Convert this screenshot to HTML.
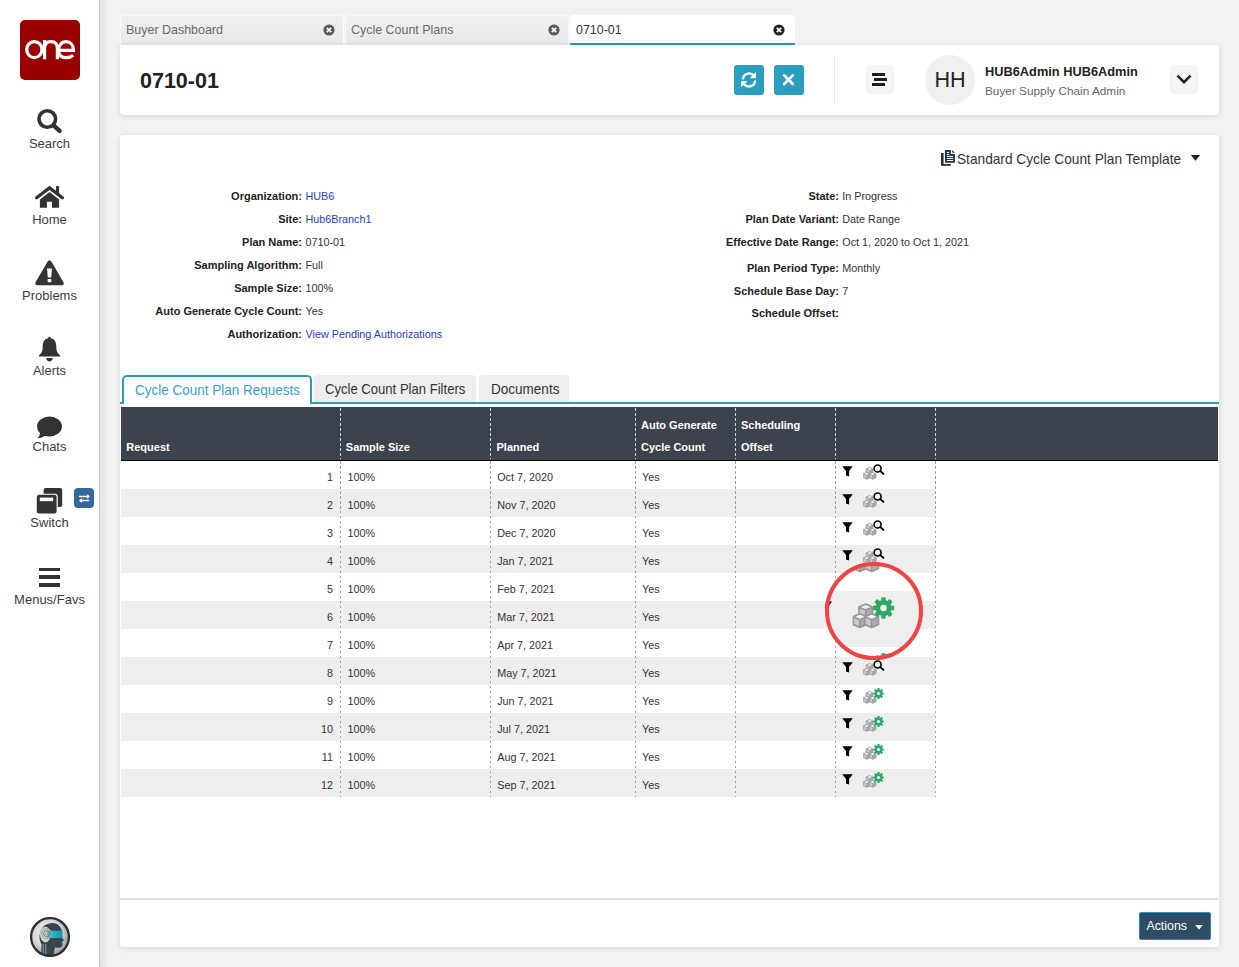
<!DOCTYPE html>
<html><head><meta charset="utf-8">
<style>
*{box-sizing:border-box}
html,body{margin:0;padding:0}
body{width:1239px;height:967px;overflow:hidden;position:relative;background:#f2f2f2;font-family:"Liberation Sans",sans-serif;color:#333}
.a{position:absolute}
.t{position:absolute;white-space:nowrap;line-height:1}
#side{left:0;top:0;width:100px;height:967px;background:#fff;border-right:1px solid #c8c8c8}
#shade{left:100px;top:0;width:9px;height:967px;background:linear-gradient(to right,rgba(0,0,0,0.06),rgba(0,0,0,0))}
.lbl{font-size:13px;color:#3d3d3d;left:0;width:99px;text-align:center}
.card{background:#fff;border-radius:3px;box-shadow:0 1px 6px rgba(0,0,0,0.11)}
.tab{top:15px;height:30px;background:linear-gradient(#efefef,#e9e9e9);border-radius:4px 4px 0 0;border:1px solid rgba(255,255,255,0.75);border-bottom:none}
.tabt{font-size:13px;color:#6a6a6a;top:23.2px;transform:scaleX(0.958);transform-origin:0 0}
.fl{font-size:11px;font-weight:bold;color:#222;text-align:right}
.fv{font-size:10.8px;color:#333}
.lnk{color:#2540cc}
.th{font-size:11px;font-weight:bold;color:#fff}
.td{font-size:10.8px;color:#333}
.vs{top:461px;height:336px;width:1px;background:repeating-linear-gradient(to bottom,#a0a0a0 0,#a0a0a0 2.5px,transparent 2.5px,transparent 5px)}
.vsh{top:408px;height:51px;width:1px;background:repeating-linear-gradient(to bottom,#d4d6da 0,#d4d6da 3px,transparent 3px,transparent 5px)}
</style></head><body>

<!-- sidebar -->
<div id="side" class="a"></div>
<div id="shade" class="a"></div>

<!-- logo -->
<div class="a" style="left:20px;top:20px;width:60px;height:60px;background:#990000;border-radius:5px"></div>
<svg class="a" style="left:20px;top:20px" width="60" height="60" viewBox="0 0 60 60">
  <g fill="none" stroke="#fff" stroke-width="3.2">
    <ellipse cx="14.35" cy="29.6" rx="7.65" ry="8"/>
    <path d="M24.55 39.2 V20 M24.55 28 C24.55 23 27.5 21.6 31 21.6 C35 21.6 37.4 23.5 37.4 28.5 V39.2"/>
    <path d="M38.6 30.35 H53.5 C53.5 25 50.5 21.6 46 21.6 C41.5 21.6 38.6 25.5 38.6 30.4 C38.6 35.5 41.8 37.6 46.2 37.6 C49.3 37.6 51.5 36.8 53.3 35.2"/>
  </g>
</svg>

<!-- Search -->
<svg class="a" style="left:36px;top:108px" width="28" height="28" viewBox="0 0 28 28">
  <circle cx="11.3" cy="11" r="8.3" fill="none" stroke="#333" stroke-width="3.6"/>
  <path d="M17.6 17.4 L23.6 22.8" stroke="#333" stroke-width="4.4" stroke-linecap="round"/>
</svg>
<div class="t lbl" style="top:136.8px">Search</div>

<!-- Home -->
<svg class="a" style="left:34px;top:185px" width="32" height="24" viewBox="0 0 32 24">
  <path d="M2.6 12.7 L15.5 2.9 L28.4 12.7" fill="none" stroke="#333" stroke-width="3.3" stroke-linecap="round"/>
  <rect x="22" y="1.1" width="3.1" height="7.5" fill="#333"/>
  <path d="M5.9 14.4 L15.5 6.9 L25.1 14.4 V22.8 H18 V16.7 H12.9 V22.8 H5.9 Z" fill="#333"/>
</svg>
<div class="t lbl" style="top:212.8px">Home</div>

<!-- Problems -->
<svg class="a" style="left:34px;top:259px" width="32" height="28" viewBox="0 0 32 28">
  <path d="M15.5 1.5 C16.6 1.5 17.2 2.2 17.7 3 L29.4 23.2 C30.3 24.8 29.4 26.3 27.6 26.3 H3.4 C1.6 26.3 0.7 24.8 1.6 23.2 L13.3 3 C13.8 2.2 14.4 1.5 15.5 1.5 Z" fill="#333"/>
  <path d="M13 9.5 H18 L17.2 18.5 H13.8 Z" fill="#fff"/>
  <rect x="13.6" y="20" width="3.8" height="3.2" rx="0.8" fill="#fff"/>
</svg>
<div class="t lbl" style="top:288.7px">Problems</div>

<!-- Alerts -->
<svg class="a" style="left:38px;top:336px" width="24" height="27" viewBox="0 0 24 27">
  <path d="M11.5 0.8 C12.4 0.8 12.8 1.4 12.8 2.2 C17 3 18.3 6.5 18.3 10.5 C18.3 15 19.2 17 22 19.2 V20.5 H1 V19.2 C3.8 17 4.7 15 4.7 10.5 C4.7 6.5 6 3 10.2 2.2 C10.2 1.4 10.6 0.8 11.5 0.8 Z" fill="#333"/>
  <path d="M8.2 22 H14.8 C14.5 24 13.2 25.5 11.5 25.5 C9.8 25.5 8.5 24 8.2 22 Z" fill="#333"/>
</svg>
<div class="t lbl" style="top:364.2px">Alerts</div>

<!-- Chats -->
<svg class="a" style="left:36px;top:416px" width="28" height="24" viewBox="0 0 28 24">
  <ellipse cx="13.5" cy="10.5" rx="12.45" ry="10" fill="#333"/>
  <path d="M3.6 15.5 C4.6 18.5 3.2 20.8 1.1 22.3 C4.5 22.2 7.2 21.3 9.6 19.6 Z" fill="#333"/>
</svg>
<div class="t lbl" style="top:440.4px">Chats</div>

<!-- Switch -->
<svg class="a" style="left:36px;top:487px" width="28" height="28" viewBox="0 0 28 28">
  <rect x="7.6" y="1" width="18.6" height="19" rx="2.2" fill="#333"/>
  <rect x="-0.2" y="6.8" width="22" height="21" rx="3" fill="#fff"/>
  <rect x="0.8" y="7.8" width="19.8" height="18.6" rx="2.2" fill="#333"/>
  <rect x="3.8" y="10.6" width="13.4" height="3.6" fill="#fff"/>
</svg>
<div class="a" style="left:74px;top:488px;width:20px;height:20px;background:#36679a;border-radius:4px"></div>
<svg class="a" style="left:74px;top:488px" width="20" height="20" viewBox="0 0 20 20">
  <path d="M4.9 8.5 H13.6 M6.4 12.5 H15.1" stroke="#fff" stroke-width="1.7"/>
  <path d="M16.1 8.5 L13.1 6.2 V10.8 Z M4.9 12.5 L7.9 10.2 V14.8 Z" fill="#fff"/>
</svg>
<div class="t lbl" style="top:516.4px">Switch</div>

<!-- Menus -->
<div class="a" style="left:39px;top:567.5px;width:21px;height:3.5px;background:#333"></div>
<div class="a" style="left:39px;top:575.2px;width:21px;height:3.5px;background:#333"></div>
<div class="a" style="left:39px;top:583px;width:21px;height:3.5px;background:#333"></div>
<div class="t lbl" style="top:592.7px">Menus/Favs</div>

<!-- bottom avatar -->
<svg class="a" style="left:30px;top:917px" width="40" height="40" viewBox="0 0 40 40">
  <defs>
    <radialGradient id="sg" cx="0.42" cy="0.4" r="0.65"><stop offset="0" stop-color="#f6f6f6"/><stop offset="0.6" stop-color="#d4d4d4"/><stop offset="1" stop-color="#8c8c8c"/></radialGradient>
    <linearGradient id="tg" x1="0" x2="1"><stop offset="0" stop-color="#3cc0d8"/><stop offset="1" stop-color="#1d93ad"/></linearGradient>
    <clipPath id="cc"><circle cx="20" cy="20" r="18.6"/></clipPath>
  </defs>
  <circle cx="20" cy="20" r="19" fill="url(#sg)"/>
  <g clip-path="url(#cc)">
    <path d="M11 40 L11.5 27 C9.5 24 9 20 10 16 C11.5 9.5 16.5 6 22.5 6 C28 6 31.5 10 32 15 L32.2 20.5 L34 23.5 L32.2 24.5 L32.5 27.5 C32 29.5 30.5 30.8 28.5 30.8 L25 30.5 L23 40 Z" fill="#36454c"/>
    <ellipse cx="15.4" cy="17.6" rx="5.4" ry="7.8" fill="#c9d5d9"/>
    <path d="M17.3 13.7 H32.5 V20.9 H17.3 Z" fill="url(#tg)"/>
    <circle cx="16.7" cy="16.6" r="5" fill="none" stroke="#b89c66" stroke-width="1"/>
    <circle cx="16.7" cy="16.6" r="3.1" fill="none" stroke="#6f7f86" stroke-width="1"/>
    <circle cx="16.7" cy="16.6" r="1.3" fill="none" stroke="#b89c66" stroke-width="0.8"/>
    <path d="M13.2 27 V40 M15.8 27 V40" stroke="#9fb0b6" stroke-width="0.9"/>
  </g>
  <circle cx="20" cy="20" r="18.9" fill="none" stroke="#2b3033" stroke-width="2.3"/>
</svg>

<!-- top tabs -->
<div class="a tab" style="left:120px;width:224px"></div>
<div class="t tabt" style="left:126px">Buyer Dashboard</div>
<div class="a tab" style="left:345px;width:224px"></div>
<div class="t tabt" style="left:351px">Cycle Count Plans</div>
<div class="a" style="left:570px;top:15px;width:225px;height:30px;background:#fff;border-radius:4px 4px 0 0;border-bottom:2px solid #2a9cbd"></div>
<div class="t tabt" style="left:576px;color:#333">0710-01</div>
<svg class="a" style="left:323px;top:24px" width="12" height="12" viewBox="0 0 12 12"><circle cx="6" cy="6" r="5.6" fill="#5a5a5a"/><path d="M3.8 3.8 L8.2 8.2 M8.2 3.8 L3.8 8.2" stroke="#fff" stroke-width="1.7"/></svg>
<svg class="a" style="left:548px;top:24px" width="12" height="12" viewBox="0 0 12 12"><circle cx="6" cy="6" r="5.6" fill="#5a5a5a"/><path d="M3.8 3.8 L8.2 8.2 M8.2 3.8 L3.8 8.2" stroke="#fff" stroke-width="1.7"/></svg>
<svg class="a" style="left:773px;top:24px" width="12" height="12" viewBox="0 0 12 12"><circle cx="6" cy="6" r="5.6" fill="#222"/><path d="M3.8 3.8 L8.2 8.2 M8.2 3.8 L3.8 8.2" stroke="#fff" stroke-width="1.7"/></svg>

<!-- header card -->
<div class="a card" style="left:120px;top:45px;width:1099px;height:70px;border-radius:0 4px 4px 4px"></div>
<div class="t" style="left:140px;top:71.0px;font-size:21.5px;font-weight:bold;color:#222">0710-01</div>
<div class="a" style="left:734px;top:65px;width:30px;height:30px;background:#2b9fbf;border-radius:3px"></div>
<svg class="a" style="left:734px;top:65px" width="30" height="30" viewBox="0 0 30 30">
  <path d="M8.9 14.6 A6.1 6.1 0 0 1 19.9 11" fill="none" stroke="#fff" stroke-width="2.3"/>
  <path d="M21.9 7 V13.2 H15.7 Z" fill="#fff"/>
  <path d="M21.1 15.4 A6.1 6.1 0 0 1 10.1 19" fill="none" stroke="#fff" stroke-width="2.3"/>
  <path d="M7.1 22.2 V16 H13.3 Z" fill="#fff"/>
</svg>
<div class="a" style="left:774px;top:65px;width:30px;height:30px;background:#2b9fbf;border-radius:3px"></div>
<svg class="a" style="left:774px;top:65px" width="30" height="30" viewBox="0 0 30 30">
  <path d="M10.2 10.4 L18.8 19 M18.8 10.4 L10.2 19" stroke="#fff" stroke-width="2.7" stroke-linecap="round"/>
</svg>
<div class="a" style="left:834px;top:56px;width:1px;height:48px;background:#e6e6e6"></div>
<div class="a" style="left:866px;top:65px;width:28px;height:29px;background:#f5f5f5;border-radius:4px"></div>
<div class="a" style="left:872px;top:73.1px;width:13px;height:2.7px;background:#1e1e1e"></div>
<div class="a" style="left:874px;top:78.2px;width:13px;height:2.7px;background:#1e1e1e"></div>
<div class="a" style="left:872px;top:83.2px;width:13px;height:2.7px;background:#1e1e1e"></div>
<div class="a" style="left:925px;top:55px;width:50px;height:50px;background:#f0f0f0;border-radius:50%"></div>
<div class="t" style="left:925px;width:50px;text-align:center;top:69.3px;font-size:22.5px;color:#222;transform:scaleX(0.96)">HH</div>
<div class="t" style="left:985px;top:65.8px;font-size:12.8px;font-weight:bold;color:#222">HUB6Admin HUB6Admin</div>
<div class="t" style="left:985px;top:85.8px;font-size:11.8px;color:#666">Buyer Supply Chain Admin</div>
<div class="a" style="left:1170px;top:65px;width:28px;height:29px;background:#f5f5f5;border-radius:4px"></div>
<svg class="a" style="left:1170px;top:65px" width="28" height="29" viewBox="0 0 28 29">
  <path d="M8.4 11.6 L14 17.2 L19.6 11.6" fill="none" stroke="#222" stroke-width="2.6" stroke-linecap="square"/>
</svg>

<!-- main card -->
<div class="a card" style="left:120px;top:135px;width:1099px;height:812px"></div>

<!-- template -->
<svg class="a" style="left:940px;top:149px" width="17" height="18" viewBox="0 0 17 18">
  <path d="M1 4 H3.6 V15.1 H10.8 V16.7 H1 Z" fill="#1f3347"/>
  <path d="M5 1 H10.8 V5.1 H14.9 V13.8 H5 Z" fill="#1f3347"/>
  <path d="M12.1 1 L14.9 3.8 H12.1 Z" fill="#1f3347"/>
  <path d="M6.9 3.45 H9.1 M6.9 5.45 H9.1 M6.9 7.45 H13.1 M6.9 9.45 H13.1 M6.9 11.5 H13.1" stroke="#fff" stroke-width="1"/>
</svg>
<div class="t" style="left:957.4px;top:151.2px;font-size:15px;color:#333;transform:scaleX(0.912);transform-origin:0 0">Standard Cycle Count Plan Template</div>
<svg class="a" style="left:1190px;top:154px" width="11" height="8" viewBox="0 0 11 8"><path d="M0.8 1 H10.2 L5.5 6.8 Z" fill="#222"/></svg>

<!-- fields left -->
<div class="t fl" style="left:100px;width:202px;top:190.6px">Organization:</div>
<div class="t fv lnk" style="left:305.5px;top:190.8px">HUB6</div>
<div class="t fl" style="left:100px;width:202px;top:213.6px">Site:</div>
<div class="t fv lnk" style="left:305.5px;top:213.8px">Hub6Branch1</div>
<div class="t fl" style="left:100px;width:202px;top:236.7px">Plan Name:</div>
<div class="t fv" style="left:305.5px;top:236.9px">0710-01</div>
<div class="t fl" style="left:100px;width:202px;top:259.6px">Sampling Algorithm:</div>
<div class="t fv" style="left:305.5px;top:259.8px">Full</div>
<div class="t fl" style="left:100px;width:202px;top:282.6px">Sample Size:</div>
<div class="t fv" style="left:305.5px;top:282.8px">100%</div>
<div class="t fl" style="left:100px;width:202px;top:305.6px">Auto Generate Cycle Count:</div>
<div class="t fv" style="left:305.5px;top:305.8px">Yes</div>
<div class="t fl" style="left:100px;width:202px;top:328.6px">Authorization:</div>
<div class="t fv lnk" style="left:305.5px;top:328.8px">View Pending Authorizations</div>

<!-- fields right -->
<div class="t fl" style="left:600px;width:239px;top:190.8px">State:</div>
<div class="t fv" style="left:842.3px;top:191px">In Progress</div>
<div class="t fl" style="left:600px;width:239px;top:213.9px">Plan Date Variant:</div>
<div class="t fv" style="left:842.3px;top:214.1px">Date Range</div>
<div class="t fl" style="left:600px;width:239px;top:236.6px">Effective Date Range:</div>
<div class="t fv" style="left:842.3px;top:236.8px">Oct 1, 2020 to Oct 1, 2021</div>
<div class="t fl" style="left:600px;width:239px;top:262.8px">Plan Period Type:</div>
<div class="t fv" style="left:842.3px;top:263px">Monthly</div>
<div class="t fl" style="left:600px;width:239px;top:285.9px">Schedule Base Day:</div>
<div class="t fv" style="left:842.3px;top:286.1px">7</div>
<div class="t fl" style="left:600px;width:239px;top:308.3px">Schedule Offset:</div>

<!-- sub tabs -->
<div class="a" style="left:120px;top:402px;width:1099px;height:2px;background:#2a9cbd"></div>
<div class="a" style="left:122px;top:375px;width:190px;height:29px;background:#fff;border:2px solid #2a9cbd;border-bottom:none;border-radius:5px 5px 0 0"></div>
<div class="t" style="left:134.5px;top:382.6px;font-size:14.4px;color:#3a9fc6;transform:scaleX(0.937);transform-origin:0 0">Cycle Count Plan Requests</div>
<div class="a" style="left:314px;top:375px;width:162px;height:27px;background:#eeeeee;border-radius:4px 4px 0 0"></div>
<div class="t" style="left:325px;top:381.8px;font-size:14.4px;color:#333;transform:scaleX(0.909);transform-origin:0 0">Cycle Count Plan Filters</div>
<div class="a" style="left:479px;top:375px;width:90px;height:27px;background:#eeeeee;border-radius:4px 4px 0 0"></div>
<div class="t" style="left:490.6px;top:381.8px;font-size:14.4px;color:#333;transform:scaleX(0.94);transform-origin:0 0">Documents</div>

<!-- table header -->
<div class="a" style="left:121px;top:407px;width:1097px;height:54px;background:#3c434d;border-bottom:1.5px solid #0a0a0a"></div>
<div class="t th" style="left:126.3px;top:441.8px">Request</div>
<div class="t th" style="left:345.8px;top:442px">Sample Size</div>
<div class="t th" style="left:496.5px;top:442px">Planned</div>
<div class="t th" style="left:641px;top:419.7px">Auto Generate</div>
<div class="t th" style="left:641px;top:442px">Cycle Count</div>
<div class="t th" style="left:741px;top:419.7px">Scheduling</div>
<div class="t th" style="left:741px;top:442px">Offset</div>

<div class="a" style="left:121px;top:461px;width:814px;height:28px;background:#fff"></div>
<div class="t td" style="left:240px;width:93px;text-align:right;top:471.7px">1</div>
<div class="t td" style="left:347.5px;top:471.7px">100%</div>
<div class="t td" style="left:497.2px;top:471.7px">Oct 7, 2020</div>
<div class="t td" style="left:642px;top:471.7px">Yes</div>
<svg class="a" style="left:842px;top:466.3px" width="11" height="11" viewBox="0 0 11 11"><path d="M0.2 0.2 H10.8 L7.1 5 V10.6 L4.0 9.6 V5 Z" fill="#000"/></svg>
<svg class="a" style="left:862.5px;top:467px" width="14" height="13" viewBox="0 0 14 13"><path d="M6.6 0.5 L10.0 2.0 L6.6 3.5 L3.1999999999999997 2.0 Z" fill="#f2f2f2"/><path d="M3.1999999999999997 2.0 L6.6 3.5 V7.3 L3.1999999999999997 5.8 Z" fill="#c8c8ca"/><path d="M6.6 3.5 L10.0 2.0 V5.8 L6.6 7.3 Z" fill="#ababaf"/><path d="M6.6 0.5 L10.0 2.0 V5.8 L6.6 7.3 L3.1999999999999997 5.8 V2.0 Z M3.1999999999999997 2.0 L6.6 3.5 L10.0 2.0 M6.6 3.5 V7.3" fill="none" stroke="#96969c" stroke-width="0.8" stroke-linejoin="round"/><path d="M3.7 5.4 L7.1 6.9 L3.7 8.4 L0.30000000000000027 6.9 Z" fill="#f2f2f2"/><path d="M0.30000000000000027 6.9 L3.7 8.4 V12.2 L0.30000000000000027 10.7 Z" fill="#c8c8ca"/><path d="M3.7 8.4 L7.1 6.9 V10.7 L3.7 12.2 Z" fill="#ababaf"/><path d="M3.7 5.4 L7.1 6.9 V10.7 L3.7 12.2 L0.30000000000000027 10.7 V6.9 Z M0.30000000000000027 6.9 L3.7 8.4 L7.1 6.9 M3.7 8.4 V12.2" fill="none" stroke="#96969c" stroke-width="0.8" stroke-linejoin="round"/><path d="M9.6 5.4 L13.0 6.9 L9.6 8.4 L6.199999999999999 6.9 Z" fill="#f2f2f2"/><path d="M6.199999999999999 6.9 L9.6 8.4 V12.2 L6.199999999999999 10.7 Z" fill="#c8c8ca"/><path d="M9.6 8.4 L13.0 6.9 V10.7 L9.6 12.2 Z" fill="#ababaf"/><path d="M9.6 5.4 L13.0 6.9 V10.7 L9.6 12.2 L6.199999999999999 10.7 V6.9 Z M6.199999999999999 6.9 L9.6 8.4 L13.0 6.9 M9.6 8.4 V12.2" fill="none" stroke="#96969c" stroke-width="0.8" stroke-linejoin="round"/></svg>
<svg class="a" style="left:872.5px;top:464.2px" width="12" height="11" viewBox="0 0 12 11">
<circle cx="4.6" cy="4.5" r="3.5" fill="none" stroke="#000" stroke-width="1.6"/>
<path d="M7.2 7.1 L10.4 9.8" stroke="#000" stroke-width="1.8" stroke-linecap="round"/></svg>
<div class="a" style="left:121px;top:489px;width:814px;height:28px;background:#eeeeee"></div>
<div class="t td" style="left:240px;width:93px;text-align:right;top:499.7px">2</div>
<div class="t td" style="left:347.5px;top:499.7px">100%</div>
<div class="t td" style="left:497.2px;top:499.7px">Nov 7, 2020</div>
<div class="t td" style="left:642px;top:499.7px">Yes</div>
<svg class="a" style="left:842px;top:494.3px" width="11" height="11" viewBox="0 0 11 11"><path d="M0.2 0.2 H10.8 L7.1 5 V10.6 L4.0 9.6 V5 Z" fill="#000"/></svg>
<svg class="a" style="left:862.5px;top:495px" width="14" height="13" viewBox="0 0 14 13"><path d="M6.6 0.5 L10.0 2.0 L6.6 3.5 L3.1999999999999997 2.0 Z" fill="#f2f2f2"/><path d="M3.1999999999999997 2.0 L6.6 3.5 V7.3 L3.1999999999999997 5.8 Z" fill="#c8c8ca"/><path d="M6.6 3.5 L10.0 2.0 V5.8 L6.6 7.3 Z" fill="#ababaf"/><path d="M6.6 0.5 L10.0 2.0 V5.8 L6.6 7.3 L3.1999999999999997 5.8 V2.0 Z M3.1999999999999997 2.0 L6.6 3.5 L10.0 2.0 M6.6 3.5 V7.3" fill="none" stroke="#96969c" stroke-width="0.8" stroke-linejoin="round"/><path d="M3.7 5.4 L7.1 6.9 L3.7 8.4 L0.30000000000000027 6.9 Z" fill="#f2f2f2"/><path d="M0.30000000000000027 6.9 L3.7 8.4 V12.2 L0.30000000000000027 10.7 Z" fill="#c8c8ca"/><path d="M3.7 8.4 L7.1 6.9 V10.7 L3.7 12.2 Z" fill="#ababaf"/><path d="M3.7 5.4 L7.1 6.9 V10.7 L3.7 12.2 L0.30000000000000027 10.7 V6.9 Z M0.30000000000000027 6.9 L3.7 8.4 L7.1 6.9 M3.7 8.4 V12.2" fill="none" stroke="#96969c" stroke-width="0.8" stroke-linejoin="round"/><path d="M9.6 5.4 L13.0 6.9 L9.6 8.4 L6.199999999999999 6.9 Z" fill="#f2f2f2"/><path d="M6.199999999999999 6.9 L9.6 8.4 V12.2 L6.199999999999999 10.7 Z" fill="#c8c8ca"/><path d="M9.6 8.4 L13.0 6.9 V10.7 L9.6 12.2 Z" fill="#ababaf"/><path d="M9.6 5.4 L13.0 6.9 V10.7 L9.6 12.2 L6.199999999999999 10.7 V6.9 Z M6.199999999999999 6.9 L9.6 8.4 L13.0 6.9 M9.6 8.4 V12.2" fill="none" stroke="#96969c" stroke-width="0.8" stroke-linejoin="round"/></svg>
<svg class="a" style="left:872.5px;top:492.2px" width="12" height="11" viewBox="0 0 12 11">
<circle cx="4.6" cy="4.5" r="3.5" fill="none" stroke="#000" stroke-width="1.6"/>
<path d="M7.2 7.1 L10.4 9.8" stroke="#000" stroke-width="1.8" stroke-linecap="round"/></svg>
<div class="a" style="left:121px;top:517px;width:814px;height:28px;background:#fff"></div>
<div class="t td" style="left:240px;width:93px;text-align:right;top:527.7px">3</div>
<div class="t td" style="left:347.5px;top:527.7px">100%</div>
<div class="t td" style="left:497.2px;top:527.7px">Dec 7, 2020</div>
<div class="t td" style="left:642px;top:527.7px">Yes</div>
<svg class="a" style="left:842px;top:522.3px" width="11" height="11" viewBox="0 0 11 11"><path d="M0.2 0.2 H10.8 L7.1 5 V10.6 L4.0 9.6 V5 Z" fill="#000"/></svg>
<svg class="a" style="left:862.5px;top:523px" width="14" height="13" viewBox="0 0 14 13"><path d="M6.6 0.5 L10.0 2.0 L6.6 3.5 L3.1999999999999997 2.0 Z" fill="#f2f2f2"/><path d="M3.1999999999999997 2.0 L6.6 3.5 V7.3 L3.1999999999999997 5.8 Z" fill="#c8c8ca"/><path d="M6.6 3.5 L10.0 2.0 V5.8 L6.6 7.3 Z" fill="#ababaf"/><path d="M6.6 0.5 L10.0 2.0 V5.8 L6.6 7.3 L3.1999999999999997 5.8 V2.0 Z M3.1999999999999997 2.0 L6.6 3.5 L10.0 2.0 M6.6 3.5 V7.3" fill="none" stroke="#96969c" stroke-width="0.8" stroke-linejoin="round"/><path d="M3.7 5.4 L7.1 6.9 L3.7 8.4 L0.30000000000000027 6.9 Z" fill="#f2f2f2"/><path d="M0.30000000000000027 6.9 L3.7 8.4 V12.2 L0.30000000000000027 10.7 Z" fill="#c8c8ca"/><path d="M3.7 8.4 L7.1 6.9 V10.7 L3.7 12.2 Z" fill="#ababaf"/><path d="M3.7 5.4 L7.1 6.9 V10.7 L3.7 12.2 L0.30000000000000027 10.7 V6.9 Z M0.30000000000000027 6.9 L3.7 8.4 L7.1 6.9 M3.7 8.4 V12.2" fill="none" stroke="#96969c" stroke-width="0.8" stroke-linejoin="round"/><path d="M9.6 5.4 L13.0 6.9 L9.6 8.4 L6.199999999999999 6.9 Z" fill="#f2f2f2"/><path d="M6.199999999999999 6.9 L9.6 8.4 V12.2 L6.199999999999999 10.7 Z" fill="#c8c8ca"/><path d="M9.6 8.4 L13.0 6.9 V10.7 L9.6 12.2 Z" fill="#ababaf"/><path d="M9.6 5.4 L13.0 6.9 V10.7 L9.6 12.2 L6.199999999999999 10.7 V6.9 Z M6.199999999999999 6.9 L9.6 8.4 L13.0 6.9 M9.6 8.4 V12.2" fill="none" stroke="#96969c" stroke-width="0.8" stroke-linejoin="round"/></svg>
<svg class="a" style="left:872.5px;top:520.2px" width="12" height="11" viewBox="0 0 12 11">
<circle cx="4.6" cy="4.5" r="3.5" fill="none" stroke="#000" stroke-width="1.6"/>
<path d="M7.2 7.1 L10.4 9.8" stroke="#000" stroke-width="1.8" stroke-linecap="round"/></svg>
<div class="a" style="left:121px;top:545px;width:814px;height:28px;background:#eeeeee"></div>
<div class="t td" style="left:240px;width:93px;text-align:right;top:555.7px">4</div>
<div class="t td" style="left:347.5px;top:555.7px">100%</div>
<div class="t td" style="left:497.2px;top:555.7px">Jan 7, 2021</div>
<div class="t td" style="left:642px;top:555.7px">Yes</div>
<svg class="a" style="left:842px;top:550.3px" width="11" height="11" viewBox="0 0 11 11"><path d="M0.2 0.2 H10.8 L7.1 5 V10.6 L4.0 9.6 V5 Z" fill="#000"/></svg>
<svg class="a" style="left:862.5px;top:551px" width="14" height="13" viewBox="0 0 14 13"><path d="M6.6 0.5 L10.0 2.0 L6.6 3.5 L3.1999999999999997 2.0 Z" fill="#f2f2f2"/><path d="M3.1999999999999997 2.0 L6.6 3.5 V7.3 L3.1999999999999997 5.8 Z" fill="#c8c8ca"/><path d="M6.6 3.5 L10.0 2.0 V5.8 L6.6 7.3 Z" fill="#ababaf"/><path d="M6.6 0.5 L10.0 2.0 V5.8 L6.6 7.3 L3.1999999999999997 5.8 V2.0 Z M3.1999999999999997 2.0 L6.6 3.5 L10.0 2.0 M6.6 3.5 V7.3" fill="none" stroke="#96969c" stroke-width="0.8" stroke-linejoin="round"/><path d="M3.7 5.4 L7.1 6.9 L3.7 8.4 L0.30000000000000027 6.9 Z" fill="#f2f2f2"/><path d="M0.30000000000000027 6.9 L3.7 8.4 V12.2 L0.30000000000000027 10.7 Z" fill="#c8c8ca"/><path d="M3.7 8.4 L7.1 6.9 V10.7 L3.7 12.2 Z" fill="#ababaf"/><path d="M3.7 5.4 L7.1 6.9 V10.7 L3.7 12.2 L0.30000000000000027 10.7 V6.9 Z M0.30000000000000027 6.9 L3.7 8.4 L7.1 6.9 M3.7 8.4 V12.2" fill="none" stroke="#96969c" stroke-width="0.8" stroke-linejoin="round"/><path d="M9.6 5.4 L13.0 6.9 L9.6 8.4 L6.199999999999999 6.9 Z" fill="#f2f2f2"/><path d="M6.199999999999999 6.9 L9.6 8.4 V12.2 L6.199999999999999 10.7 Z" fill="#c8c8ca"/><path d="M9.6 8.4 L13.0 6.9 V10.7 L9.6 12.2 Z" fill="#ababaf"/><path d="M9.6 5.4 L13.0 6.9 V10.7 L9.6 12.2 L6.199999999999999 10.7 V6.9 Z M6.199999999999999 6.9 L9.6 8.4 L13.0 6.9 M9.6 8.4 V12.2" fill="none" stroke="#96969c" stroke-width="0.8" stroke-linejoin="round"/></svg>
<svg class="a" style="left:872.5px;top:548.2px" width="12" height="11" viewBox="0 0 12 11">
<circle cx="4.6" cy="4.5" r="3.5" fill="none" stroke="#000" stroke-width="1.6"/>
<path d="M7.2 7.1 L10.4 9.8" stroke="#000" stroke-width="1.8" stroke-linecap="round"/></svg>
<div class="a" style="left:121px;top:573px;width:814px;height:28px;background:#fff"></div>
<div class="t td" style="left:240px;width:93px;text-align:right;top:583.7px">5</div>
<div class="t td" style="left:347.5px;top:583.7px">100%</div>
<div class="t td" style="left:497.2px;top:583.7px">Feb 7, 2021</div>
<div class="t td" style="left:642px;top:583.7px">Yes</div>
<div class="a" style="left:121px;top:601px;width:814px;height:28px;background:#eeeeee"></div>
<div class="t td" style="left:240px;width:93px;text-align:right;top:611.7px">6</div>
<div class="t td" style="left:347.5px;top:611.7px">100%</div>
<div class="t td" style="left:497.2px;top:611.7px">Mar 7, 2021</div>
<div class="t td" style="left:642px;top:611.7px">Yes</div>
<div class="a" style="left:121px;top:629px;width:814px;height:28px;background:#fff"></div>
<div class="t td" style="left:240px;width:93px;text-align:right;top:639.7px">7</div>
<div class="t td" style="left:347.5px;top:639.7px">100%</div>
<div class="t td" style="left:497.2px;top:639.7px">Apr 7, 2021</div>
<div class="t td" style="left:642px;top:639.7px">Yes</div>
<div class="a" style="left:121px;top:657px;width:814px;height:28px;background:#eeeeee"></div>
<div class="t td" style="left:240px;width:93px;text-align:right;top:667.7px">8</div>
<div class="t td" style="left:347.5px;top:667.7px">100%</div>
<div class="t td" style="left:497.2px;top:667.7px">May 7, 2021</div>
<div class="t td" style="left:642px;top:667.7px">Yes</div>
<svg class="a" style="left:842px;top:662.3px" width="11" height="11" viewBox="0 0 11 11"><path d="M0.2 0.2 H10.8 L7.1 5 V10.6 L4.0 9.6 V5 Z" fill="#000"/></svg>
<svg class="a" style="left:862.5px;top:663px" width="14" height="13" viewBox="0 0 14 13"><path d="M6.6 0.5 L10.0 2.0 L6.6 3.5 L3.1999999999999997 2.0 Z" fill="#f2f2f2"/><path d="M3.1999999999999997 2.0 L6.6 3.5 V7.3 L3.1999999999999997 5.8 Z" fill="#c8c8ca"/><path d="M6.6 3.5 L10.0 2.0 V5.8 L6.6 7.3 Z" fill="#ababaf"/><path d="M6.6 0.5 L10.0 2.0 V5.8 L6.6 7.3 L3.1999999999999997 5.8 V2.0 Z M3.1999999999999997 2.0 L6.6 3.5 L10.0 2.0 M6.6 3.5 V7.3" fill="none" stroke="#96969c" stroke-width="0.8" stroke-linejoin="round"/><path d="M3.7 5.4 L7.1 6.9 L3.7 8.4 L0.30000000000000027 6.9 Z" fill="#f2f2f2"/><path d="M0.30000000000000027 6.9 L3.7 8.4 V12.2 L0.30000000000000027 10.7 Z" fill="#c8c8ca"/><path d="M3.7 8.4 L7.1 6.9 V10.7 L3.7 12.2 Z" fill="#ababaf"/><path d="M3.7 5.4 L7.1 6.9 V10.7 L3.7 12.2 L0.30000000000000027 10.7 V6.9 Z M0.30000000000000027 6.9 L3.7 8.4 L7.1 6.9 M3.7 8.4 V12.2" fill="none" stroke="#96969c" stroke-width="0.8" stroke-linejoin="round"/><path d="M9.6 5.4 L13.0 6.9 L9.6 8.4 L6.199999999999999 6.9 Z" fill="#f2f2f2"/><path d="M6.199999999999999 6.9 L9.6 8.4 V12.2 L6.199999999999999 10.7 Z" fill="#c8c8ca"/><path d="M9.6 8.4 L13.0 6.9 V10.7 L9.6 12.2 Z" fill="#ababaf"/><path d="M9.6 5.4 L13.0 6.9 V10.7 L9.6 12.2 L6.199999999999999 10.7 V6.9 Z M6.199999999999999 6.9 L9.6 8.4 L13.0 6.9 M9.6 8.4 V12.2" fill="none" stroke="#96969c" stroke-width="0.8" stroke-linejoin="round"/></svg>
<svg class="a" style="left:872.5px;top:660.2px" width="12" height="11" viewBox="0 0 12 11">
<circle cx="4.6" cy="4.5" r="3.5" fill="none" stroke="#000" stroke-width="1.6"/>
<path d="M7.2 7.1 L10.4 9.8" stroke="#000" stroke-width="1.8" stroke-linecap="round"/></svg>
<div class="a" style="left:121px;top:685px;width:814px;height:28px;background:#fff"></div>
<div class="t td" style="left:240px;width:93px;text-align:right;top:695.7px">9</div>
<div class="t td" style="left:347.5px;top:695.7px">100%</div>
<div class="t td" style="left:497.2px;top:695.7px">Jun 7, 2021</div>
<div class="t td" style="left:642px;top:695.7px">Yes</div>
<svg class="a" style="left:842px;top:690.3px" width="11" height="11" viewBox="0 0 11 11"><path d="M0.2 0.2 H10.8 L7.1 5 V10.6 L4.0 9.6 V5 Z" fill="#000"/></svg>
<svg class="a" style="left:862.5px;top:691px" width="14" height="13" viewBox="0 0 14 13"><path d="M6.6 0.5 L10.0 2.0 L6.6 3.5 L3.1999999999999997 2.0 Z" fill="#f2f2f2"/><path d="M3.1999999999999997 2.0 L6.6 3.5 V7.3 L3.1999999999999997 5.8 Z" fill="#c8c8ca"/><path d="M6.6 3.5 L10.0 2.0 V5.8 L6.6 7.3 Z" fill="#ababaf"/><path d="M6.6 0.5 L10.0 2.0 V5.8 L6.6 7.3 L3.1999999999999997 5.8 V2.0 Z M3.1999999999999997 2.0 L6.6 3.5 L10.0 2.0 M6.6 3.5 V7.3" fill="none" stroke="#96969c" stroke-width="0.8" stroke-linejoin="round"/><path d="M3.7 5.4 L7.1 6.9 L3.7 8.4 L0.30000000000000027 6.9 Z" fill="#f2f2f2"/><path d="M0.30000000000000027 6.9 L3.7 8.4 V12.2 L0.30000000000000027 10.7 Z" fill="#c8c8ca"/><path d="M3.7 8.4 L7.1 6.9 V10.7 L3.7 12.2 Z" fill="#ababaf"/><path d="M3.7 5.4 L7.1 6.9 V10.7 L3.7 12.2 L0.30000000000000027 10.7 V6.9 Z M0.30000000000000027 6.9 L3.7 8.4 L7.1 6.9 M3.7 8.4 V12.2" fill="none" stroke="#96969c" stroke-width="0.8" stroke-linejoin="round"/><path d="M9.6 5.4 L13.0 6.9 L9.6 8.4 L6.199999999999999 6.9 Z" fill="#f2f2f2"/><path d="M6.199999999999999 6.9 L9.6 8.4 V12.2 L6.199999999999999 10.7 Z" fill="#c8c8ca"/><path d="M9.6 8.4 L13.0 6.9 V10.7 L9.6 12.2 Z" fill="#ababaf"/><path d="M9.6 5.4 L13.0 6.9 V10.7 L9.6 12.2 L6.199999999999999 10.7 V6.9 Z M6.199999999999999 6.9 L9.6 8.4 L13.0 6.9 M9.6 8.4 V12.2" fill="none" stroke="#96969c" stroke-width="0.8" stroke-linejoin="round"/></svg>
<svg class="a" style="left:872.5px;top:687.5px" width="11" height="11" viewBox="0 0 11 11"><g fill="#2fa866"><circle cx="5.5" cy="5.5" r="4"/><rect x="4.4" y="0.1" width="2.2" height="10.8" rx="0.5" transform="rotate(0 5.5 5.5)"/><rect x="4.4" y="0.1" width="2.2" height="10.8" rx="0.5" transform="rotate(45 5.5 5.5)"/><rect x="4.4" y="0.1" width="2.2" height="10.8" rx="0.5" transform="rotate(90 5.5 5.5)"/><rect x="4.4" y="0.1" width="2.2" height="10.8" rx="0.5" transform="rotate(135 5.5 5.5)"/></g><circle cx="5.5" cy="5.5" r="1.6" fill="#f4fbf6"/></svg>
<div class="a" style="left:121px;top:713px;width:814px;height:28px;background:#eeeeee"></div>
<div class="t td" style="left:240px;width:93px;text-align:right;top:723.7px">10</div>
<div class="t td" style="left:347.5px;top:723.7px">100%</div>
<div class="t td" style="left:497.2px;top:723.7px">Jul 7, 2021</div>
<div class="t td" style="left:642px;top:723.7px">Yes</div>
<svg class="a" style="left:842px;top:718.3px" width="11" height="11" viewBox="0 0 11 11"><path d="M0.2 0.2 H10.8 L7.1 5 V10.6 L4.0 9.6 V5 Z" fill="#000"/></svg>
<svg class="a" style="left:862.5px;top:719px" width="14" height="13" viewBox="0 0 14 13"><path d="M6.6 0.5 L10.0 2.0 L6.6 3.5 L3.1999999999999997 2.0 Z" fill="#f2f2f2"/><path d="M3.1999999999999997 2.0 L6.6 3.5 V7.3 L3.1999999999999997 5.8 Z" fill="#c8c8ca"/><path d="M6.6 3.5 L10.0 2.0 V5.8 L6.6 7.3 Z" fill="#ababaf"/><path d="M6.6 0.5 L10.0 2.0 V5.8 L6.6 7.3 L3.1999999999999997 5.8 V2.0 Z M3.1999999999999997 2.0 L6.6 3.5 L10.0 2.0 M6.6 3.5 V7.3" fill="none" stroke="#96969c" stroke-width="0.8" stroke-linejoin="round"/><path d="M3.7 5.4 L7.1 6.9 L3.7 8.4 L0.30000000000000027 6.9 Z" fill="#f2f2f2"/><path d="M0.30000000000000027 6.9 L3.7 8.4 V12.2 L0.30000000000000027 10.7 Z" fill="#c8c8ca"/><path d="M3.7 8.4 L7.1 6.9 V10.7 L3.7 12.2 Z" fill="#ababaf"/><path d="M3.7 5.4 L7.1 6.9 V10.7 L3.7 12.2 L0.30000000000000027 10.7 V6.9 Z M0.30000000000000027 6.9 L3.7 8.4 L7.1 6.9 M3.7 8.4 V12.2" fill="none" stroke="#96969c" stroke-width="0.8" stroke-linejoin="round"/><path d="M9.6 5.4 L13.0 6.9 L9.6 8.4 L6.199999999999999 6.9 Z" fill="#f2f2f2"/><path d="M6.199999999999999 6.9 L9.6 8.4 V12.2 L6.199999999999999 10.7 Z" fill="#c8c8ca"/><path d="M9.6 8.4 L13.0 6.9 V10.7 L9.6 12.2 Z" fill="#ababaf"/><path d="M9.6 5.4 L13.0 6.9 V10.7 L9.6 12.2 L6.199999999999999 10.7 V6.9 Z M6.199999999999999 6.9 L9.6 8.4 L13.0 6.9 M9.6 8.4 V12.2" fill="none" stroke="#96969c" stroke-width="0.8" stroke-linejoin="round"/></svg>
<svg class="a" style="left:872.5px;top:715.5px" width="11" height="11" viewBox="0 0 11 11"><g fill="#2fa866"><circle cx="5.5" cy="5.5" r="4"/><rect x="4.4" y="0.1" width="2.2" height="10.8" rx="0.5" transform="rotate(0 5.5 5.5)"/><rect x="4.4" y="0.1" width="2.2" height="10.8" rx="0.5" transform="rotate(45 5.5 5.5)"/><rect x="4.4" y="0.1" width="2.2" height="10.8" rx="0.5" transform="rotate(90 5.5 5.5)"/><rect x="4.4" y="0.1" width="2.2" height="10.8" rx="0.5" transform="rotate(135 5.5 5.5)"/></g><circle cx="5.5" cy="5.5" r="1.6" fill="#f4fbf6"/></svg>
<div class="a" style="left:121px;top:741px;width:814px;height:28px;background:#fff"></div>
<div class="t td" style="left:240px;width:93px;text-align:right;top:751.7px">11</div>
<div class="t td" style="left:347.5px;top:751.7px">100%</div>
<div class="t td" style="left:497.2px;top:751.7px">Aug 7, 2021</div>
<div class="t td" style="left:642px;top:751.7px">Yes</div>
<svg class="a" style="left:842px;top:746.3px" width="11" height="11" viewBox="0 0 11 11"><path d="M0.2 0.2 H10.8 L7.1 5 V10.6 L4.0 9.6 V5 Z" fill="#000"/></svg>
<svg class="a" style="left:862.5px;top:747px" width="14" height="13" viewBox="0 0 14 13"><path d="M6.6 0.5 L10.0 2.0 L6.6 3.5 L3.1999999999999997 2.0 Z" fill="#f2f2f2"/><path d="M3.1999999999999997 2.0 L6.6 3.5 V7.3 L3.1999999999999997 5.8 Z" fill="#c8c8ca"/><path d="M6.6 3.5 L10.0 2.0 V5.8 L6.6 7.3 Z" fill="#ababaf"/><path d="M6.6 0.5 L10.0 2.0 V5.8 L6.6 7.3 L3.1999999999999997 5.8 V2.0 Z M3.1999999999999997 2.0 L6.6 3.5 L10.0 2.0 M6.6 3.5 V7.3" fill="none" stroke="#96969c" stroke-width="0.8" stroke-linejoin="round"/><path d="M3.7 5.4 L7.1 6.9 L3.7 8.4 L0.30000000000000027 6.9 Z" fill="#f2f2f2"/><path d="M0.30000000000000027 6.9 L3.7 8.4 V12.2 L0.30000000000000027 10.7 Z" fill="#c8c8ca"/><path d="M3.7 8.4 L7.1 6.9 V10.7 L3.7 12.2 Z" fill="#ababaf"/><path d="M3.7 5.4 L7.1 6.9 V10.7 L3.7 12.2 L0.30000000000000027 10.7 V6.9 Z M0.30000000000000027 6.9 L3.7 8.4 L7.1 6.9 M3.7 8.4 V12.2" fill="none" stroke="#96969c" stroke-width="0.8" stroke-linejoin="round"/><path d="M9.6 5.4 L13.0 6.9 L9.6 8.4 L6.199999999999999 6.9 Z" fill="#f2f2f2"/><path d="M6.199999999999999 6.9 L9.6 8.4 V12.2 L6.199999999999999 10.7 Z" fill="#c8c8ca"/><path d="M9.6 8.4 L13.0 6.9 V10.7 L9.6 12.2 Z" fill="#ababaf"/><path d="M9.6 5.4 L13.0 6.9 V10.7 L9.6 12.2 L6.199999999999999 10.7 V6.9 Z M6.199999999999999 6.9 L9.6 8.4 L13.0 6.9 M9.6 8.4 V12.2" fill="none" stroke="#96969c" stroke-width="0.8" stroke-linejoin="round"/></svg>
<svg class="a" style="left:872.5px;top:743.5px" width="11" height="11" viewBox="0 0 11 11"><g fill="#2fa866"><circle cx="5.5" cy="5.5" r="4"/><rect x="4.4" y="0.1" width="2.2" height="10.8" rx="0.5" transform="rotate(0 5.5 5.5)"/><rect x="4.4" y="0.1" width="2.2" height="10.8" rx="0.5" transform="rotate(45 5.5 5.5)"/><rect x="4.4" y="0.1" width="2.2" height="10.8" rx="0.5" transform="rotate(90 5.5 5.5)"/><rect x="4.4" y="0.1" width="2.2" height="10.8" rx="0.5" transform="rotate(135 5.5 5.5)"/></g><circle cx="5.5" cy="5.5" r="1.6" fill="#f4fbf6"/></svg>
<div class="a" style="left:121px;top:769px;width:814px;height:28px;background:#eeeeee"></div>
<div class="t td" style="left:240px;width:93px;text-align:right;top:779.7px">12</div>
<div class="t td" style="left:347.5px;top:779.7px">100%</div>
<div class="t td" style="left:497.2px;top:779.7px">Sep 7, 2021</div>
<div class="t td" style="left:642px;top:779.7px">Yes</div>
<svg class="a" style="left:842px;top:774.3px" width="11" height="11" viewBox="0 0 11 11"><path d="M0.2 0.2 H10.8 L7.1 5 V10.6 L4.0 9.6 V5 Z" fill="#000"/></svg>
<svg class="a" style="left:862.5px;top:775px" width="14" height="13" viewBox="0 0 14 13"><path d="M6.6 0.5 L10.0 2.0 L6.6 3.5 L3.1999999999999997 2.0 Z" fill="#f2f2f2"/><path d="M3.1999999999999997 2.0 L6.6 3.5 V7.3 L3.1999999999999997 5.8 Z" fill="#c8c8ca"/><path d="M6.6 3.5 L10.0 2.0 V5.8 L6.6 7.3 Z" fill="#ababaf"/><path d="M6.6 0.5 L10.0 2.0 V5.8 L6.6 7.3 L3.1999999999999997 5.8 V2.0 Z M3.1999999999999997 2.0 L6.6 3.5 L10.0 2.0 M6.6 3.5 V7.3" fill="none" stroke="#96969c" stroke-width="0.8" stroke-linejoin="round"/><path d="M3.7 5.4 L7.1 6.9 L3.7 8.4 L0.30000000000000027 6.9 Z" fill="#f2f2f2"/><path d="M0.30000000000000027 6.9 L3.7 8.4 V12.2 L0.30000000000000027 10.7 Z" fill="#c8c8ca"/><path d="M3.7 8.4 L7.1 6.9 V10.7 L3.7 12.2 Z" fill="#ababaf"/><path d="M3.7 5.4 L7.1 6.9 V10.7 L3.7 12.2 L0.30000000000000027 10.7 V6.9 Z M0.30000000000000027 6.9 L3.7 8.4 L7.1 6.9 M3.7 8.4 V12.2" fill="none" stroke="#96969c" stroke-width="0.8" stroke-linejoin="round"/><path d="M9.6 5.4 L13.0 6.9 L9.6 8.4 L6.199999999999999 6.9 Z" fill="#f2f2f2"/><path d="M6.199999999999999 6.9 L9.6 8.4 V12.2 L6.199999999999999 10.7 Z" fill="#c8c8ca"/><path d="M9.6 8.4 L13.0 6.9 V10.7 L9.6 12.2 Z" fill="#ababaf"/><path d="M9.6 5.4 L13.0 6.9 V10.7 L9.6 12.2 L6.199999999999999 10.7 V6.9 Z M6.199999999999999 6.9 L9.6 8.4 L13.0 6.9 M9.6 8.4 V12.2" fill="none" stroke="#96969c" stroke-width="0.8" stroke-linejoin="round"/></svg>
<svg class="a" style="left:872.5px;top:771.5px" width="11" height="11" viewBox="0 0 11 11"><g fill="#2fa866"><circle cx="5.5" cy="5.5" r="4"/><rect x="4.4" y="0.1" width="2.2" height="10.8" rx="0.5" transform="rotate(0 5.5 5.5)"/><rect x="4.4" y="0.1" width="2.2" height="10.8" rx="0.5" transform="rotate(45 5.5 5.5)"/><rect x="4.4" y="0.1" width="2.2" height="10.8" rx="0.5" transform="rotate(90 5.5 5.5)"/><rect x="4.4" y="0.1" width="2.2" height="10.8" rx="0.5" transform="rotate(135 5.5 5.5)"/></g><circle cx="5.5" cy="5.5" r="1.6" fill="#f4fbf6"/></svg>
<div class="a vs" style="left:340px"></div>
<div class="a vsh" style="left:340px"></div>
<div class="a vs" style="left:490px"></div>
<div class="a vsh" style="left:490px"></div>
<div class="a vs" style="left:635px"></div>
<div class="a vsh" style="left:635px"></div>
<div class="a vs" style="left:735px"></div>
<div class="a vsh" style="left:735px"></div>
<div class="a vs" style="left:835px"></div>
<div class="a vsh" style="left:835px"></div>
<div class="a vs" style="left:935px"></div>
<div class="a vsh" style="left:935px"></div>
<div class="a" style="left:824.5px;top:562px;width:98px;height:98px;border-radius:50%;overflow:hidden;background:#fff">
<div class="a" style="left:-824.5px;top:-562px;width:2478px;height:1934px;transform-origin:873.5px 611px;transform:scale(2)">
<div class="a" style="left:121px;top:573px;width:814px;height:28px;background:#fff"></div>
<svg class="a" style="left:842px;top:578.3px" width="11" height="11" viewBox="0 0 11 11"><path d="M0.2 0.2 H10.8 L7.1 5 V10.6 L4.0 9.6 V5 Z" fill="#000"/></svg>
<svg class="a" style="left:862.5px;top:579px" width="14" height="13" viewBox="0 0 14 13"><path d="M6.6 0.5 L10.0 2.0 L6.6 3.5 L3.1999999999999997 2.0 Z" fill="#f2f2f2"/><path d="M3.1999999999999997 2.0 L6.6 3.5 V7.3 L3.1999999999999997 5.8 Z" fill="#c8c8ca"/><path d="M6.6 3.5 L10.0 2.0 V5.8 L6.6 7.3 Z" fill="#ababaf"/><path d="M6.6 0.5 L10.0 2.0 V5.8 L6.6 7.3 L3.1999999999999997 5.8 V2.0 Z M3.1999999999999997 2.0 L6.6 3.5 L10.0 2.0 M6.6 3.5 V7.3" fill="none" stroke="#96969c" stroke-width="0.8" stroke-linejoin="round"/><path d="M3.7 5.4 L7.1 6.9 L3.7 8.4 L0.30000000000000027 6.9 Z" fill="#f2f2f2"/><path d="M0.30000000000000027 6.9 L3.7 8.4 V12.2 L0.30000000000000027 10.7 Z" fill="#c8c8ca"/><path d="M3.7 8.4 L7.1 6.9 V10.7 L3.7 12.2 Z" fill="#ababaf"/><path d="M3.7 5.4 L7.1 6.9 V10.7 L3.7 12.2 L0.30000000000000027 10.7 V6.9 Z M0.30000000000000027 6.9 L3.7 8.4 L7.1 6.9 M3.7 8.4 V12.2" fill="none" stroke="#96969c" stroke-width="0.8" stroke-linejoin="round"/><path d="M9.6 5.4 L13.0 6.9 L9.6 8.4 L6.199999999999999 6.9 Z" fill="#f2f2f2"/><path d="M6.199999999999999 6.9 L9.6 8.4 V12.2 L6.199999999999999 10.7 Z" fill="#c8c8ca"/><path d="M9.6 8.4 L13.0 6.9 V10.7 L9.6 12.2 Z" fill="#ababaf"/><path d="M9.6 5.4 L13.0 6.9 V10.7 L9.6 12.2 L6.199999999999999 10.7 V6.9 Z M6.199999999999999 6.9 L9.6 8.4 L13.0 6.9 M9.6 8.4 V12.2" fill="none" stroke="#96969c" stroke-width="0.8" stroke-linejoin="round"/></svg>
<svg class="a" style="left:872.5px;top:575.5px" width="11" height="11" viewBox="0 0 11 11"><g fill="#2fa866"><circle cx="5.5" cy="5.5" r="4"/><rect x="4.4" y="0.1" width="2.2" height="10.8" rx="0.5" transform="rotate(0 5.5 5.5)"/><rect x="4.4" y="0.1" width="2.2" height="10.8" rx="0.5" transform="rotate(45 5.5 5.5)"/><rect x="4.4" y="0.1" width="2.2" height="10.8" rx="0.5" transform="rotate(90 5.5 5.5)"/><rect x="4.4" y="0.1" width="2.2" height="10.8" rx="0.5" transform="rotate(135 5.5 5.5)"/></g><circle cx="5.5" cy="5.5" r="1.6" fill="#f4fbf6"/></svg>
<div class="a" style="left:121px;top:601px;width:814px;height:28px;background:#eeeeee"></div>
<svg class="a" style="left:842px;top:606.3px" width="11" height="11" viewBox="0 0 11 11"><path d="M0.2 0.2 H10.8 L7.1 5 V10.6 L4.0 9.6 V5 Z" fill="#000"/></svg>
<svg class="a" style="left:862.5px;top:607px" width="14" height="13" viewBox="0 0 14 13"><path d="M6.6 0.5 L10.0 2.0 L6.6 3.5 L3.1999999999999997 2.0 Z" fill="#f2f2f2"/><path d="M3.1999999999999997 2.0 L6.6 3.5 V7.3 L3.1999999999999997 5.8 Z" fill="#c8c8ca"/><path d="M6.6 3.5 L10.0 2.0 V5.8 L6.6 7.3 Z" fill="#ababaf"/><path d="M6.6 0.5 L10.0 2.0 V5.8 L6.6 7.3 L3.1999999999999997 5.8 V2.0 Z M3.1999999999999997 2.0 L6.6 3.5 L10.0 2.0 M6.6 3.5 V7.3" fill="none" stroke="#96969c" stroke-width="0.8" stroke-linejoin="round"/><path d="M3.7 5.4 L7.1 6.9 L3.7 8.4 L0.30000000000000027 6.9 Z" fill="#f2f2f2"/><path d="M0.30000000000000027 6.9 L3.7 8.4 V12.2 L0.30000000000000027 10.7 Z" fill="#c8c8ca"/><path d="M3.7 8.4 L7.1 6.9 V10.7 L3.7 12.2 Z" fill="#ababaf"/><path d="M3.7 5.4 L7.1 6.9 V10.7 L3.7 12.2 L0.30000000000000027 10.7 V6.9 Z M0.30000000000000027 6.9 L3.7 8.4 L7.1 6.9 M3.7 8.4 V12.2" fill="none" stroke="#96969c" stroke-width="0.8" stroke-linejoin="round"/><path d="M9.6 5.4 L13.0 6.9 L9.6 8.4 L6.199999999999999 6.9 Z" fill="#f2f2f2"/><path d="M6.199999999999999 6.9 L9.6 8.4 V12.2 L6.199999999999999 10.7 Z" fill="#c8c8ca"/><path d="M9.6 8.4 L13.0 6.9 V10.7 L9.6 12.2 Z" fill="#ababaf"/><path d="M9.6 5.4 L13.0 6.9 V10.7 L9.6 12.2 L6.199999999999999 10.7 V6.9 Z M6.199999999999999 6.9 L9.6 8.4 L13.0 6.9 M9.6 8.4 V12.2" fill="none" stroke="#96969c" stroke-width="0.8" stroke-linejoin="round"/></svg>
<svg class="a" style="left:872.5px;top:603.5px" width="11" height="11" viewBox="0 0 11 11"><g fill="#2fa866"><circle cx="5.5" cy="5.5" r="4"/><rect x="4.4" y="0.1" width="2.2" height="10.8" rx="0.5" transform="rotate(0 5.5 5.5)"/><rect x="4.4" y="0.1" width="2.2" height="10.8" rx="0.5" transform="rotate(45 5.5 5.5)"/><rect x="4.4" y="0.1" width="2.2" height="10.8" rx="0.5" transform="rotate(90 5.5 5.5)"/><rect x="4.4" y="0.1" width="2.2" height="10.8" rx="0.5" transform="rotate(135 5.5 5.5)"/></g><circle cx="5.5" cy="5.5" r="1.6" fill="#f4fbf6"/></svg>
<div class="a" style="left:121px;top:629px;width:814px;height:28px;background:#fff"></div>
<svg class="a" style="left:842px;top:634.3px" width="11" height="11" viewBox="0 0 11 11"><path d="M0.2 0.2 H10.8 L7.1 5 V10.6 L4.0 9.6 V5 Z" fill="#000"/></svg>
<svg class="a" style="left:862.5px;top:635px" width="14" height="13" viewBox="0 0 14 13"><path d="M6.6 0.5 L10.0 2.0 L6.6 3.5 L3.1999999999999997 2.0 Z" fill="#f2f2f2"/><path d="M3.1999999999999997 2.0 L6.6 3.5 V7.3 L3.1999999999999997 5.8 Z" fill="#c8c8ca"/><path d="M6.6 3.5 L10.0 2.0 V5.8 L6.6 7.3 Z" fill="#ababaf"/><path d="M6.6 0.5 L10.0 2.0 V5.8 L6.6 7.3 L3.1999999999999997 5.8 V2.0 Z M3.1999999999999997 2.0 L6.6 3.5 L10.0 2.0 M6.6 3.5 V7.3" fill="none" stroke="#96969c" stroke-width="0.8" stroke-linejoin="round"/><path d="M3.7 5.4 L7.1 6.9 L3.7 8.4 L0.30000000000000027 6.9 Z" fill="#f2f2f2"/><path d="M0.30000000000000027 6.9 L3.7 8.4 V12.2 L0.30000000000000027 10.7 Z" fill="#c8c8ca"/><path d="M3.7 8.4 L7.1 6.9 V10.7 L3.7 12.2 Z" fill="#ababaf"/><path d="M3.7 5.4 L7.1 6.9 V10.7 L3.7 12.2 L0.30000000000000027 10.7 V6.9 Z M0.30000000000000027 6.9 L3.7 8.4 L7.1 6.9 M3.7 8.4 V12.2" fill="none" stroke="#96969c" stroke-width="0.8" stroke-linejoin="round"/><path d="M9.6 5.4 L13.0 6.9 L9.6 8.4 L6.199999999999999 6.9 Z" fill="#f2f2f2"/><path d="M6.199999999999999 6.9 L9.6 8.4 V12.2 L6.199999999999999 10.7 Z" fill="#c8c8ca"/><path d="M9.6 8.4 L13.0 6.9 V10.7 L9.6 12.2 Z" fill="#ababaf"/><path d="M9.6 5.4 L13.0 6.9 V10.7 L9.6 12.2 L6.199999999999999 10.7 V6.9 Z M6.199999999999999 6.9 L9.6 8.4 L13.0 6.9 M9.6 8.4 V12.2" fill="none" stroke="#96969c" stroke-width="0.8" stroke-linejoin="round"/></svg>
<svg class="a" style="left:872.5px;top:631.5px" width="11" height="11" viewBox="0 0 11 11"><g fill="#2fa866"><circle cx="5.5" cy="5.5" r="4"/><rect x="4.4" y="0.1" width="2.2" height="10.8" rx="0.5" transform="rotate(0 5.5 5.5)"/><rect x="4.4" y="0.1" width="2.2" height="10.8" rx="0.5" transform="rotate(45 5.5 5.5)"/><rect x="4.4" y="0.1" width="2.2" height="10.8" rx="0.5" transform="rotate(90 5.5 5.5)"/><rect x="4.4" y="0.1" width="2.2" height="10.8" rx="0.5" transform="rotate(135 5.5 5.5)"/></g><circle cx="5.5" cy="5.5" r="1.6" fill="#f4fbf6"/></svg>
<div class="a" style="left:121px;top:657px;width:814px;height:28px;background:#eeeeee"></div>
<svg class="a" style="left:842px;top:662.3px" width="11" height="11" viewBox="0 0 11 11"><path d="M0.2 0.2 H10.8 L7.1 5 V10.6 L4.0 9.6 V5 Z" fill="#000"/></svg>
<svg class="a" style="left:862.5px;top:663px" width="14" height="13" viewBox="0 0 14 13"><path d="M6.6 0.5 L10.0 2.0 L6.6 3.5 L3.1999999999999997 2.0 Z" fill="#f2f2f2"/><path d="M3.1999999999999997 2.0 L6.6 3.5 V7.3 L3.1999999999999997 5.8 Z" fill="#c8c8ca"/><path d="M6.6 3.5 L10.0 2.0 V5.8 L6.6 7.3 Z" fill="#ababaf"/><path d="M6.6 0.5 L10.0 2.0 V5.8 L6.6 7.3 L3.1999999999999997 5.8 V2.0 Z M3.1999999999999997 2.0 L6.6 3.5 L10.0 2.0 M6.6 3.5 V7.3" fill="none" stroke="#96969c" stroke-width="0.8" stroke-linejoin="round"/><path d="M3.7 5.4 L7.1 6.9 L3.7 8.4 L0.30000000000000027 6.9 Z" fill="#f2f2f2"/><path d="M0.30000000000000027 6.9 L3.7 8.4 V12.2 L0.30000000000000027 10.7 Z" fill="#c8c8ca"/><path d="M3.7 8.4 L7.1 6.9 V10.7 L3.7 12.2 Z" fill="#ababaf"/><path d="M3.7 5.4 L7.1 6.9 V10.7 L3.7 12.2 L0.30000000000000027 10.7 V6.9 Z M0.30000000000000027 6.9 L3.7 8.4 L7.1 6.9 M3.7 8.4 V12.2" fill="none" stroke="#96969c" stroke-width="0.8" stroke-linejoin="round"/><path d="M9.6 5.4 L13.0 6.9 L9.6 8.4 L6.199999999999999 6.9 Z" fill="#f2f2f2"/><path d="M6.199999999999999 6.9 L9.6 8.4 V12.2 L6.199999999999999 10.7 Z" fill="#c8c8ca"/><path d="M9.6 8.4 L13.0 6.9 V10.7 L9.6 12.2 Z" fill="#ababaf"/><path d="M9.6 5.4 L13.0 6.9 V10.7 L9.6 12.2 L6.199999999999999 10.7 V6.9 Z M6.199999999999999 6.9 L9.6 8.4 L13.0 6.9 M9.6 8.4 V12.2" fill="none" stroke="#96969c" stroke-width="0.8" stroke-linejoin="round"/></svg>
<svg class="a" style="left:872.5px;top:659.5px" width="11" height="11" viewBox="0 0 11 11"><g fill="#2fa866"><circle cx="5.5" cy="5.5" r="4"/><rect x="4.4" y="0.1" width="2.2" height="10.8" rx="0.5" transform="rotate(0 5.5 5.5)"/><rect x="4.4" y="0.1" width="2.2" height="10.8" rx="0.5" transform="rotate(45 5.5 5.5)"/><rect x="4.4" y="0.1" width="2.2" height="10.8" rx="0.5" transform="rotate(90 5.5 5.5)"/><rect x="4.4" y="0.1" width="2.2" height="10.8" rx="0.5" transform="rotate(135 5.5 5.5)"/></g><circle cx="5.5" cy="5.5" r="1.6" fill="#f4fbf6"/></svg>
</div></div>
<div class="a" style="left:824.5px;top:562px;width:98px;height:98px;border-radius:50%;border:4.1px solid #f04444"></div>

<div class="a" style="left:120px;top:898px;width:1098px;height:1.5px;background:#dedede"></div>
<div class="a" style="left:1139px;top:912px;width:72px;height:28px;background:#2e4c63;border:1px solid #1f94b8;border-radius:2px"></div>
<div class="t" style="left:1146.4px;top:920.2px;font-size:12.4px;color:#fff">Actions</div>
<svg class="a" style="left:1194px;top:924px" width="10" height="7" viewBox="0 0 10 7"><path d="M1.2 1 H8.8 L5 5.4 Z" fill="#fff"/></svg>

</body></html>
